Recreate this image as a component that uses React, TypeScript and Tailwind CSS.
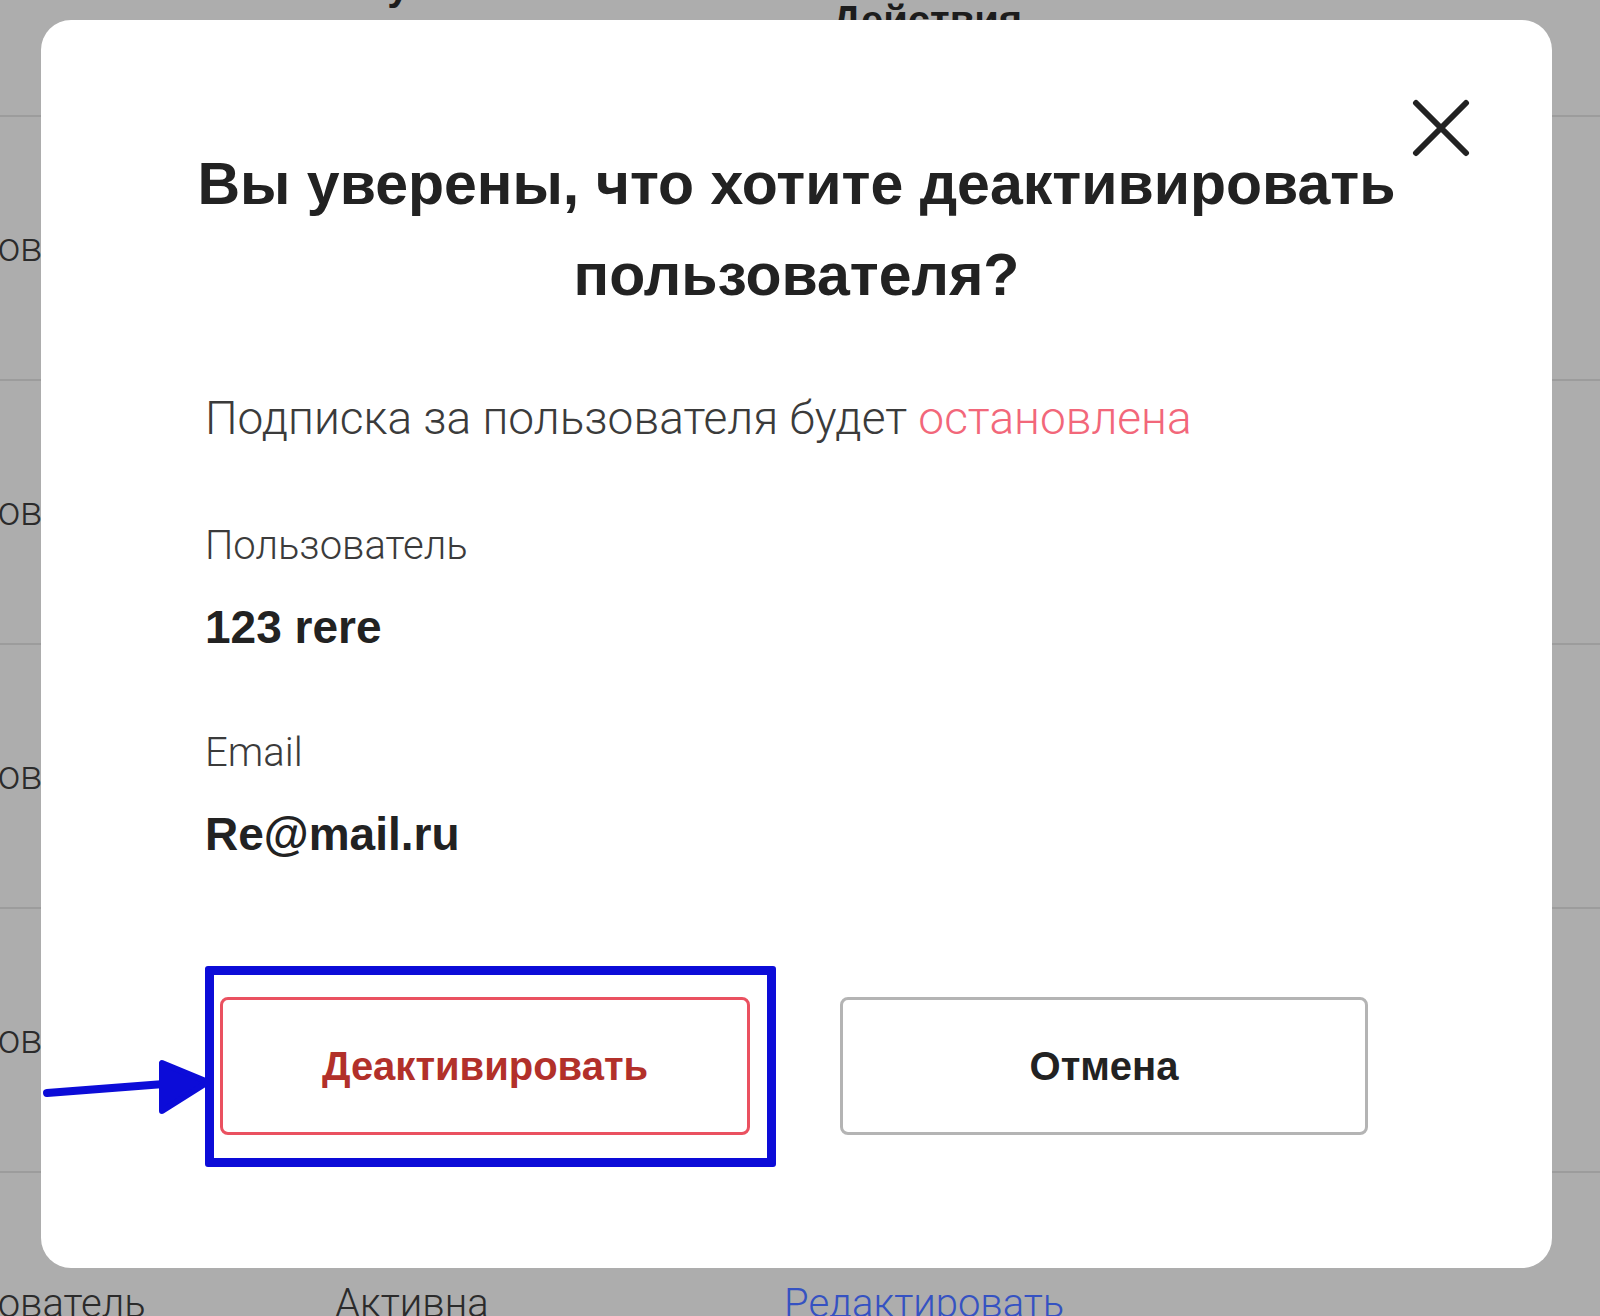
const rows = [0, 1, 2, 3, 4];

function CloseIcon() {
  return (
    <svg width="58" height="58" viewBox="0 0 58 58" fill="none">
      <path d="M4 4 L54 54 M54 4 L4 54" stroke="#222222" strokeWidth="6" strokeLinecap="round" />
    </svg>
  );
}

function Arrow() {
  return (
    <svg
      width="180"
      height="66"
      viewBox="0 0 180 66"
      fill="none"
      className="absolute left-[-182px] top-[58px]"
    >
      <path d="M9 38 L126 29" stroke="#0c0cd8" strokeWidth="8" strokeLinecap="round" />
      <polygon
        points="124,8 124,56 170,27"
        fill="#0c0cd8"
        stroke="#0c0cd8"
        strokeWidth="6"
        strokeLinejoin="round"
      />
    </svg>
  );
}

export default function App() {
  return (
    <div className="relative h-[1316px] w-full overflow-hidden bg-[#adadad] font-['Roboto',sans-serif]">
      {/* table behind the overlay */}
      <div className="flex h-[117px] border-b-2 border-[#9c9c9c]">
        <div className="w-[296px]" />
        <div className="mt-[-34px] w-[536px] font-['Liberation_Sans',sans-serif] text-[40px] font-bold leading-none text-[#1c1c1c]">
          Статус
        </div>
        <div className="font-['Liberation_Sans',sans-serif] text-[40px] font-bold leading-none text-[#1c1c1c]">
          Действия
        </div>
      </div>
      {rows.map((r) => (
        <div
          key={r}
          className="flex h-[264px] items-center border-b-2 border-[#9c9c9c] text-[40px] font-light text-[#2b2b2b]"
        >
          <div className="ml-[-117px] w-[452px] shrink-0">Пользователь</div>
          <div className="w-[449px] shrink-0">Активна</div>
          <div className="text-[#3552c2]">Редактировать</div>
        </div>
      ))}

      {/* modal */}
      <div className="absolute left-[41px] top-[20px] h-[1248px] w-[1511px] rounded-[30px] bg-white">
        <button className="absolute right-[82px] top-[79px]">
          <CloseIcon />
        </button>

        <h2 className="pt-[119px] text-center font-['Liberation_Sans',sans-serif] text-[59px] font-bold leading-[91px] text-[#222222]">
          Вы уверены, что хотите деактивировать
          <br />
          пользователя?
        </h2>

        <div className="pl-[164px]">
          <p className="mt-[73px] text-[46px] font-light leading-[48px] text-[#3b3b3b]">
            Подписка за пользователя будет <span className="text-[#f2677a]">остановлена</span>
          </p>

          <p className="mt-[80px] text-[40px] font-light leading-[48px] text-[#3b3b3b]">
            Пользователь
          </p>
          <p className="mt-[29px] font-['Liberation_Sans',sans-serif] text-[46px] font-bold leading-[56px] text-[#222222]">
            123 rere
          </p>

          <p className="mt-[74px] text-[40px] font-light leading-[48px] text-[#3b3b3b]">
            Email
          </p>
          <p className="mt-[29px] font-['Liberation_Sans',sans-serif] text-[46px] font-bold leading-[56px] text-[#222222]">
            Re@mail.ru
          </p>

          <div className="mt-[135px] ml-[15px] flex gap-[90px]">
            <div className="relative">
              <div className="absolute left-[-15px] top-[-31px] h-[201px] w-[571px] rounded-[3px] border-[9px] border-[#0c0cd8]" />
              <Arrow />
              <button className="flex h-[138px] w-[530px] items-center justify-center rounded-[8px] border-[3px] border-[#ea5160] font-['Liberation_Sans',sans-serif] text-[40px] font-bold text-[#b2302a]">
                Деактивировать
              </button>
            </div>
            <button className="flex h-[138px] w-[528px] items-center justify-center rounded-[8px] border-[3px] border-[#b4b4b4] font-['Liberation_Sans',sans-serif] text-[40px] font-bold text-[#222222]">
              Отмена
            </button>
          </div>
        </div>
      </div>
    </div>
  );
}
